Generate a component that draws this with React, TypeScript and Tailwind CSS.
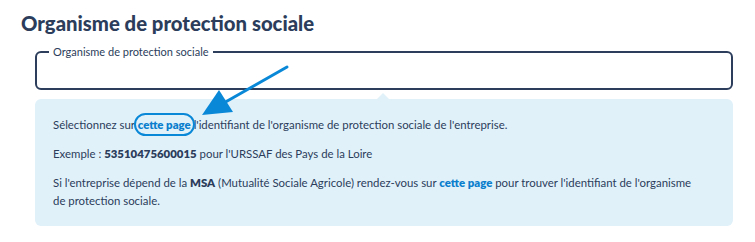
import React from 'react';

const font = { fontFamily: 'Lato, "Noto Sans", sans-serif' };

const Link: React.FC<{ children: React.ReactNode }> = ({ children }) => (
  <a href="#" className="font-extrabold text-[#0b7fcd]">
    {children}
  </a>
);

export default function App() {
  return (
    <div className="relative w-[755px] h-[242px] bg-white text-[#2b3d5b]" style={font}>
      <h2 className="pl-[21px] pt-[10px] text-[20.3px] leading-[26px] font-black">
        Organisme de protection sociale
      </h2>

      <div className="ml-[35px] w-[698px] mt-[10px]">
        <fieldset className="h-[44px] border-2 border-[#2c3e5c] rounded-[6px] px-[12px]">
          <legend className="px-[4px] text-[11px] leading-[12px]">Organisme de protection sociale</legend>
        </fieldset>

        <div className="relative mt-[9px] bg-[#e1f1fa] rounded-[6px] pl-[18px] pr-[20px] pt-[17px] pb-[16px] text-[11.4px] leading-[18px]">
          <span className="absolute -top-[6px] left-[342px] w-0 h-0 border-x-[6px] border-x-transparent border-b-[6px] border-b-[#e1f1fa]" />
          <p>
            Sélectionnez sur{' '}
            <span className="relative">
              <Link>cette page</Link>
              <span className="absolute -left-[4px] -right-[4px] -top-[5px] -bottom-[5px] rounded-full border-[2.5px] border-[#0a88d8]" />
            </span>{' '}
            l'identifiant de l'organisme de protection sociale de l'entreprise.
          </p>
          <p className="mt-[11px]">
            Exemple : <b className="font-extrabold">53510475600015</b> pour l'URSSAF des Pays de la Loire
          </p>
          <p className="mt-[11px]">
            Si l'entreprise dépend de la <b className="font-extrabold">MSA</b> (Mutualité Sociale Agricole) rendez-vous sur{' '}
            <Link>cette page</Link> pour trouver l'identifiant de l'organisme
            <br />
            de protection sociale.
          </p>
        </div>
      </div>

      {/* annotation arrow */}
      <svg className="absolute left-0 top-0 pointer-events-none" width="755" height="242">
        <line x1="287" y1="67" x2="222" y2="104" stroke="#0a88d8" strokeWidth="3" strokeLinecap="round" />
        <polygon points="219,90 202,115 233,112" fill="#0a88d8" />
      </svg>
    </div>
  );
}
